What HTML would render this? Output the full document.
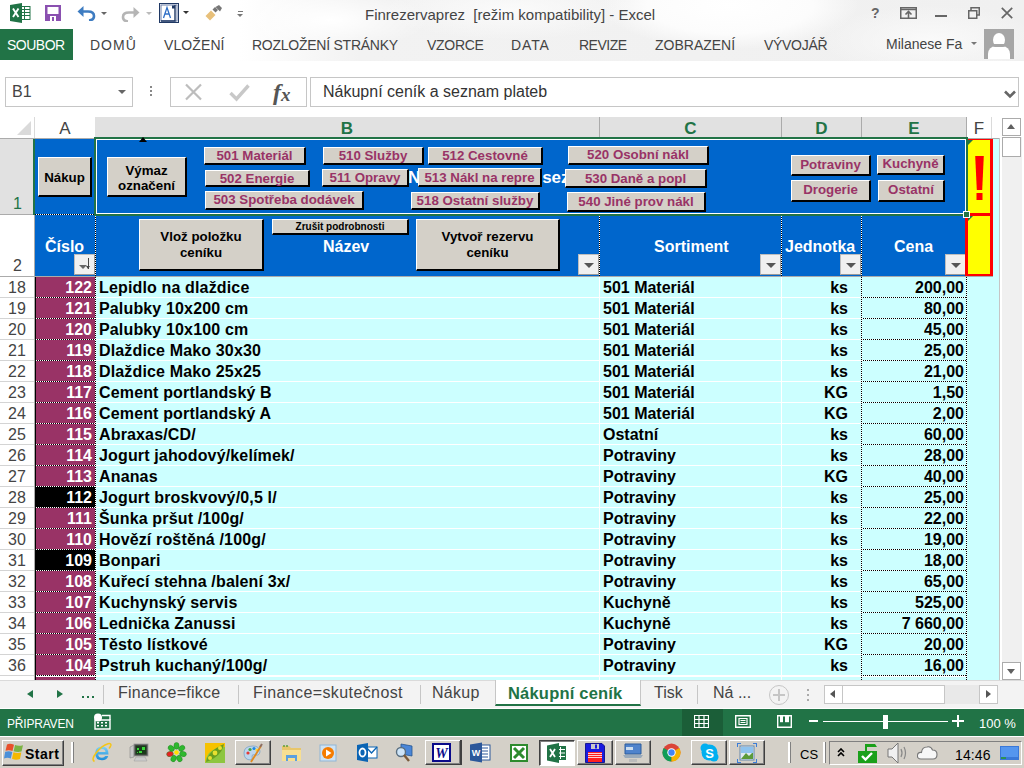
<!DOCTYPE html>
<html><head><meta charset="utf-8">
<style>
*{margin:0;padding:0;box-sizing:border-box}
html,body{width:1024px;height:768px;overflow:hidden;background:#fff;font-family:"Liberation Sans",sans-serif;position:relative}
.a{position:absolute}
.t{position:absolute;white-space:pre;line-height:1}
.tab{position:absolute;top:37px;font-size:14px;color:#444;letter-spacing:-0.3px;white-space:pre;line-height:16px}
.rh{position:absolute;left:0;width:34px;height:20px;background:#fff;color:#444;font-size:16px;text-align:center;line-height:21px}
.btn{position:absolute;background:#d4d0c8;border-top:1px solid #fff;border-left:1px solid #fff;border-right:2px solid #000;border-bottom:2px solid #000;font-weight:bold;text-align:center;white-space:pre;color:#993366}
.cA,.cB,.cC,.cD,.cE{position:absolute;height:20px;font-weight:bold;font-size:16px;line-height:21px;white-space:pre;overflow:hidden}
.cA{left:36px;width:59px;background:#993366;color:#fff;text-align:right;padding-right:3px}
.cB{left:96px;width:503px;background:#ccffff;padding-left:3px;color:#000;letter-spacing:0.15px}
.cC{left:600px;width:181px;background:#ccffff;padding-left:3px}
.cD{left:782px;width:79px;background:#ccffff;text-align:right;padding-right:13px}
.cE{left:862px;width:104px;background:#ccffff;text-align:right;padding-right:2px}
.dotx{background:repeating-linear-gradient(90deg,#000 0 1px,#fff 1px 2px)}
.doty{background:repeating-linear-gradient(180deg,#000 0 1px,#fff 1px 2px)}
.ch{position:absolute;top:119px;height:20px;line-height:20px;text-align:center;font-size:17px;color:#217346;font-weight:bold}
.hl{position:absolute;top:238px;font-size:16px;font-weight:bold;color:#fff;white-space:pre;line-height:18px}
.flt{position:absolute;width:21px;height:21px;background:#f0f0f0;border:1px solid #bdbdbd;border-right:1px solid #999;border-bottom:1px solid #999}
.flt.dd:after{content:"";position:absolute;left:5px;top:8px;border-left:5px solid transparent;border-right:5px solid transparent;border-top:5px solid #555}
.st{position:absolute;top:684px;font-size:16px;color:#444;white-space:pre;line-height:18px}
.tbb{position:absolute;background:#d4d0c8;border-top:1px solid #fff;border-left:1px solid #fff;border-right:1px solid #404040;border-bottom:1px solid #404040;box-shadow:inset -1px -1px 0 #808080}
.tbp{position:absolute;background:#fff;border-top:1px solid #404040;border-left:1px solid #404040;border-right:1px solid #fff;border-bottom:1px solid #fff;box-shadow:inset 1px 1px 0 #808080}

</style></head><body>
<!-- TITLE BAR & RIBBON -->
<div class="a" style="left:0;top:0;width:1024px;height:61px;background:linear-gradient(90deg,#fff 0,#fff 240px,#f2f2f2 360px,#f0f0f0 1024px);overflow:hidden">
  <div class="a" style="left:600px;top:-40px;width:260px;height:90px;border-radius:50%;background:radial-gradient(ellipse at center,#fff 0%,#fcfcfc 45%,rgba(255,255,255,0) 70%)"></div>
  <div class="a" style="left:230px;top:-10px;width:200px;height:60px;border-radius:50%;background:radial-gradient(ellipse at center,#fff 0%,rgba(255,255,255,0) 70%)"></div>
  <div class="a" style="left:820px;top:5px;width:220px;height:70px;border-radius:50%;background:radial-gradient(ellipse at center,#fafafa 0%,rgba(255,255,255,0) 70%)"></div>
  <div class="a" style="left:380px;top:-20px;width:260px;height:60px;border-radius:50%;background:radial-gradient(ellipse at center,#fbfbfb 0%,rgba(255,255,255,0) 70%)"></div>
  <svg class="a" style="left:10px;top:3px" width="21" height="20" viewBox="0 0 21 20">
<rect x="9.5" y="3.5" width="10.5" height="13" fill="#fff" stroke="#217346" stroke-width="1"/>
<path d="M10 6.5 h10 M10 9.5 h10 M10 12.5 h10 M14.5 3.5 v13" stroke="#217346" stroke-width="1"/>
<path d="M0 2 L12 0 V20 L0 18 Z" fill="#217346"/>
<path d="M3 5.5 L8.5 14 M8.5 5.5 L3 14" stroke="#fff" stroke-width="1.9"/>
</svg>
<svg class="a" style="left:45px;top:5px" width="16" height="16" viewBox="0 0 16 16">
<path d="M0 0 H16 V16 H0 Z" fill="#8a50b0"/><rect x="2.5" y="2" width="11" height="7" fill="#fff"/><rect x="5" y="11" width="6" height="5" fill="#fff"/><rect x="7" y="12" width="2" height="4" fill="#8a50b0"/>
</svg>
<svg class="a" style="left:77px;top:5px" width="19" height="16" viewBox="0 0 19 16">
<path d="M2 6.5 H11 Q17 6.5 17 11 Q17 15 12 15.5" stroke="#3e7cc1" stroke-width="2.6" fill="none"/>
<path d="M0.5 6.5 L6.5 1 V12 Z" fill="#3e7cc1"/>
</svg>
<div class="a" style="left:101px;top:12px;border-left:3px solid transparent;border-right:3px solid transparent;border-top:3px solid #666"></div>
<svg class="a" style="left:121px;top:6px" width="19" height="16" viewBox="0 0 19 16">
<path d="M17 6.5 H8 Q2 6.5 2 11 Q2 15 7 15.5" stroke="#b5b5b5" stroke-width="2.6" fill="none"/>
<path d="M18.5 6.5 L12.5 1 V12 Z" fill="#b5b5b5"/>
</svg>
<div class="a" style="left:146px;top:12px;border-left:3px solid transparent;border-right:3px solid transparent;border-top:3px solid #bbb"></div>
<svg class="a" style="left:159px;top:3px" width="20" height="20" viewBox="0 0 20 20">
<rect x="0.5" y="0.5" width="19" height="19" fill="#fff" stroke="#1f3864" stroke-width="1"/>
<rect x="2" y="2" width="16" height="16" fill="none" stroke="#6b7fa8" stroke-width="1"/>
<path d="M16 2 V18 H2" stroke="#1f3864" stroke-width="1.4" fill="none"/>
<rect x="13" y="2.5" width="3" height="3" fill="#1f3864"/>
<path d="M4.5 15 L8 4.5 L11.5 15 M6 11 H10" stroke="#2f6fc7" stroke-width="1.3" fill="none"/>
</svg>
<div class="a" style="left:183px;top:11px;border-left:3.5px solid transparent;border-right:3.5px solid transparent;border-top:3.5px solid #333"></div>
<svg class="a" style="left:205px;top:5px" width="18" height="16" viewBox="0 0 18 16">
<path d="M0.5 11 L6 5.5 L10.5 10 L5 15.5 Z" fill="#e8c07a"/>
<path d="M7.5 4.5 L10 2 L13 5 L10.5 7.5 Z M10.5 2 L14 0 L17 3 L15 6.5 Z" fill="#777"/>
</svg>
<div class="a" style="left:238px;top:11px;width:5px;height:1px;background:#777"></div>
<div class="a" style="left:237px;top:14px;border-left:3px solid transparent;border-right:3px solid transparent;border-top:3px solid #777"></div>
<!-- window controls -->
<div class="t" style="left:871px;top:6px;font-size:14px;font-weight:bold;color:#666">?</div>
<svg class="a" style="left:900px;top:7px" width="17" height="12" viewBox="0 0 17 12"><rect x="0.75" y="0.75" width="15.5" height="10.5" fill="none" stroke="#666" stroke-width="1.5"/><path d="M1 2.5 H16" stroke="#666" stroke-width="1.5"/><path d="M8.5 4.5 V11 M5.5 7.5 L8.5 4.5 L11.5 7.5" stroke="#666" stroke-width="1.6" fill="none"/></svg>
<div class="a" style="left:935px;top:15px;width:12px;height:2px;background:#666"></div>
<svg class="a" style="left:968px;top:7px" width="12" height="12" viewBox="0 0 12 12"><path d="M3 3 V0.75 H11.25 V8 H9" fill="none" stroke="#666" stroke-width="1.5"/><rect x="0.75" y="3.75" width="8" height="7.5" fill="none" stroke="#666" stroke-width="1.5"/></svg>
<svg class="a" style="left:1001px;top:7px" width="12" height="12" viewBox="0 0 12 12"><path d="M0.8 0.8 L11.2 11.2 M11.2 0.8 L0.8 11.2" stroke="#666" stroke-width="1.7"/></svg>

  <div class="t" style="left:365px;top:7px;font-size:15px;color:#444">Finrezervaprez  [režim kompatibility] - Excel</div>
  <div class="a" style="left:0;top:29px;width:73px;height:31px;background:#217346"></div>
  <div class="tab" style="left:7px;color:#fff;letter-spacing:-0.5px">SOUBOR</div>
  <div class="tab" style="left:90px;letter-spacing:1px">DOMŮ</div>
  <div class="tab" style="left:164px;letter-spacing:0.1px">VLOŽENÍ</div>
  <div class="tab" style="left:252px;letter-spacing:-0.25px">ROZLOŽENÍ STRÁNKY</div>
  <div class="tab" style="left:427px">VZORCE</div>
  <div class="tab" style="left:511px;letter-spacing:0.9px">DATA</div>
  <div class="tab" style="left:579px;letter-spacing:-0.5px">REVIZE</div>
  <div class="tab" style="left:655px;letter-spacing:0px">ZOBRAZENÍ</div>
  <div class="tab" style="left:764px">VÝVOJÁŘ</div>
  <div class="tab" style="left:886px;letter-spacing:0;top:36px">Milanese Fa</div>
  <div class="a" style="left:971px;top:42px;border-left:3px solid transparent;border-right:3px solid transparent;border-top:3px solid #777"></div>
  <div class="a" style="left:984px;top:29px;width:30px;height:30px;background:#a6a6a6;overflow:hidden">
    <div class="a" style="left:9px;top:4px;width:12px;height:14px;border-radius:50%;background:#fff"></div>
    <div class="a" style="left:4px;top:17px;width:22px;height:20px;border-radius:8px 8px 0 0;background:#fff"></div>
    <div class="a" style="left:8px;top:15px;width:14px;height:3px;background:#a6a6a6;border-radius:0 0 7px 7px"></div>
  </div>
</div>

<!-- FORMULA BAR -->
<div class="a" style="left:5px;top:77px;width:128px;height:30px;border:1px solid #c6c6c6;background:#fff"></div>
<div class="t" style="left:12px;top:84px;font-size:16px;color:#444">B1</div>
<div class="a" style="left:118px;top:90px;border-left:4px solid transparent;border-right:4px solid transparent;border-top:4px solid #666"></div>
<div class="a" style="left:150px;top:86px;width:2px;height:2px;background:#888"></div>
<div class="a" style="left:150px;top:90px;width:2px;height:2px;background:#888"></div>
<div class="a" style="left:150px;top:94px;width:2px;height:2px;background:#888"></div>
<div class="a" style="left:170px;top:77px;width:137px;height:30px;border:1px solid #c6c6c6;background:#fff"></div>
<svg class="a" style="left:184px;top:83px" width="20" height="18" viewBox="0 0 20 18"><path d="M2 1.5 L17 16.5 M17 1.5 L2 16.5" stroke="#bdbdbd" stroke-width="2.2" fill="none"/></svg>
<svg class="a" style="left:229px;top:83px" width="21" height="19" viewBox="0 0 21 19"><path d="M1.5 10 L7.5 16 L19.5 2.5" stroke="#c8c8c8" stroke-width="3.4" fill="none"/></svg>
<div class="t" style="left:273px;top:80px;font-family:'Liberation Serif',serif;font-style:italic;font-weight:bold;font-size:24px;color:#555">f</div><div class="t" style="left:281px;top:85px;font-family:'Liberation Serif',serif;font-style:italic;font-weight:bold;font-size:19px;color:#555">x</div>
<div class="a" style="left:310px;top:77px;width:709px;height:30px;border:1px solid #c6c6c6;background:#fff"></div>
<div class="t" style="left:323px;top:84px;font-size:16px;color:#333">Nákupní ceník a seznam plateb</div>
<svg class="a" style="left:1004px;top:90px" width="12" height="9" viewBox="0 0 12 9"><path d="M1 1.5 L6 6.5 L11 1.5" stroke="#666" stroke-width="2.6" fill="none"/></svg>

<!-- COLUMN HEADERS -->
<div class="a" style="left:0;top:117px;width:1000px;height:21px;background:#fff"></div>
<div class="a" style="left:0;top:138px;width:1000px;height:1px;background:#ababab"></div>
<div class="a" style="left:17px;top:121px;width:0;height:0;border-left:14px solid transparent;border-bottom:14px solid #dadada"></div>
<div class="a" style="left:34px;top:117px;width:1px;height:21px;background:#dadada"></div>
<div class="a" style="left:95px;top:117px;width:871px;height:20px;background:#e1e1e1"></div>
<div class="a" style="left:599px;top:117px;width:1px;height:20px;background:#ababab"></div>
<div class="a" style="left:781px;top:117px;width:1px;height:20px;background:#ababab"></div>
<div class="a" style="left:861px;top:117px;width:1px;height:20px;background:#ababab"></div>
<div class="a" style="left:966px;top:117px;width:1px;height:21px;background:#ababab"></div>
<div class="a" style="left:991px;top:117px;width:1px;height:21px;background:#dadada"></div>
<div class="ch" style="left:35px;width:60px;color:#444;font-weight:normal">A</div>
<div class="ch" style="left:95px;width:504px">B</div>
<div class="ch" style="left:600px;width:181px">C</div>
<div class="ch" style="left:782px;width:79px">D</div>
<div class="ch" style="left:862px;width:104px">E</div>
<div class="ch" style="left:967px;width:24px;color:#444;font-weight:normal">F</div>

<!-- ROW HEADERS 1,2 -->
<div class="a" style="left:0;top:139px;width:33px;height:75px;background:#e1e1e1"></div>
<div class="a" style="left:33px;top:139px;width:2px;height:76px;background:#217346"></div>
<div class="a" style="left:0;top:214px;width:33px;height:1px;background:#ababab"></div>
<div class="t" style="left:13px;top:196px;font-size:16px;color:#217346">1</div>
<div class="a" style="left:34px;top:215px;width:1px;height:61px;background:#ababab"></div>
<div class="t" style="left:13px;top:258px;font-size:16px;color:#444">2</div>
<div class="a" style="left:0;top:276px;width:1000px;height:1px;background:#ababab"></div>

<!-- ROW 1 / ROW 2 blue -->
<div class="a" style="left:35px;top:139px;width:931px;height:137px;background:#0066cc"></div>
<div class="a dotx" style="left:35px;top:214px;width:60px;height:1px"></div>
<div class="a doty" style="left:95px;top:215px;width:1px;height:61px"></div>
<div class="a doty" style="left:599px;top:215px;width:1px;height:61px"></div>
<div class="a doty" style="left:781px;top:215px;width:1px;height:61px"></div>
<div class="a doty" style="left:861px;top:215px;width:1px;height:61px"></div>
<div class="t" style="left:408px;top:169px;font-size:17px;font-weight:bold;color:#fff">Nákupní ceník a seznam plateb</div>
<div class="hl" style="left:45px">Číslo</div>
<div class="hl" style="left:323px">Název</div>
<div class="hl" style="left:654px">Sortiment</div>
<div class="hl" style="left:785px">Jednotka</div>
<div class="hl" style="left:894px">Cena</div>
<div class="flt" style="left:74px;top:254px"><span class="a" style="left:4px;top:10px;border-left:4px solid transparent;border-right:4px solid transparent;border-top:4px solid #666"></span><span class="a" style="left:13px;top:3px;width:1px;height:11px;background:#444"></span><span class="a" style="left:11px;top:11px;border-left:2.5px solid transparent;border-right:2.5px solid transparent;border-top:3px solid #444"></span></div>
<div class="flt dd" style="left:578px;top:254px"></div>
<div class="flt dd" style="left:760px;top:254px"></div>
<div class="flt dd" style="left:840px;top:254px"></div>
<div class="flt dd" style="left:945px;top:254px"></div>

<!-- F column yellow -->
<div class="a" style="left:967px;top:139px;width:26px;height:137px;background:#ffff00"></div>
<div class="a" style="left:967px;top:139px;width:26px;height:1px;background:#f00"></div>
<div class="a" style="left:990px;top:139px;width:3px;height:137px;background:#f00"></div>
<div class="a" style="left:967px;top:213px;width:26px;height:3px;background:#f00"></div>
<div class="a" style="left:965px;top:213px;width:3px;height:63px;background:#f00"></div>
<div class="a" style="left:965px;top:274px;width:28px;height:2px;background:#f00"></div>
<div class="a" style="left:968px;top:140px;border-right:5px solid transparent;border-top:5px solid #217346"></div>
<div class="a" style="left:968px;top:216px;border-right:5px solid transparent;border-top:5px solid #217346"></div>
<svg class="a" style="left:974px;top:155px" width="11" height="47" viewBox="0 0 11 47"><path d="M1.2 1 H9.8 L8.2 35 H2.8 Z" fill="#f00"/><rect x="2.5" y="38" width="6" height="7" fill="#f00"/></svg>
<div class="a" style="left:993px;top:139px;width:6px;height:541px;background:#ccffff"></div>
<div class="a" style="left:999px;top:138px;width:1px;height:542px;background:#c6c6c6"></div>

<!-- Selection border B1:E1 -->
<div class="a" style="left:94px;top:137px;width:874px;height:79px;border:2px solid #217346"></div>
<div class="a" style="left:96px;top:139px;width:870px;height:75px;border:1px solid #fff"></div>
<div class="a" style="left:963px;top:211px;width:7px;height:7px;background:#217346;border:1px solid #fff"></div>

<div class="a" style="left:139px;top:137px;border-left:4px solid transparent;border-right:4px solid transparent;border-bottom:5px solid #000"></div>
<div class="btn" style="left:38px;top:157px;width:54px;height:40px;font-size:13.3px;line-height:40px;color:#000;">Nákup</div>
<div class="btn" style="left:107px;top:157px;width:80px;height:40px;font-size:13.3px;line-height:15px;color:#000;padding-top:5px;">Výmaz
označení</div>
<div class="btn" style="left:204px;top:147px;width:102px;height:18px;font-size:13.3px;line-height:15px;color:#993366;">501 Materiál</div>
<div class="btn" style="left:205px;top:170px;width:105px;height:17px;font-size:13.3px;line-height:16px;color:#993366;">502 Energie</div>
<div class="btn" style="left:205px;top:191px;width:159px;height:19px;font-size:13.3px;line-height:16px;color:#993366;">503 Spotřeba dodávek</div>
<div class="btn" style="left:323px;top:147px;width:101px;height:18px;font-size:13.3px;line-height:15px;color:#993366;">510 Služby</div>
<div class="btn" style="left:322px;top:169px;width:87px;height:18px;font-size:13.3px;line-height:16px;color:#993366;">511 Opravy</div>
<div class="btn" style="left:428px;top:147px;width:115px;height:18px;font-size:13.3px;line-height:16px;color:#993366;">512 Cestovné</div>
<div class="btn" style="left:418px;top:168px;width:124px;height:19px;font-size:13.3px;line-height:17px;color:#993366;">513 Nákl na repre</div>
<div class="btn" style="left:411px;top:192px;width:129px;height:18px;font-size:13.3px;line-height:16px;color:#993366;">518 Ostatní služby</div>
<div class="btn" style="left:568px;top:146px;width:141px;height:19px;font-size:13.3px;line-height:15px;color:#993366;">520 Osobní nákl</div>
<div class="btn" style="left:565px;top:169px;width:142px;height:19px;font-size:13.3px;line-height:17px;color:#993366;">530 Daně a popl</div>
<div class="btn" style="left:567px;top:192px;width:139px;height:20px;font-size:13.3px;line-height:17px;color:#993366;">540 Jiné prov nákl</div>
<div class="btn" style="left:791px;top:155px;width:80px;height:21px;font-size:13.3px;line-height:18px;color:#993366;">Potraviny</div>
<div class="btn" style="left:877px;top:155px;width:68px;height:20px;font-size:13.3px;line-height:16px;color:#993366;">Kuchyně</div>
<div class="btn" style="left:791px;top:180px;width:80px;height:22px;font-size:13.3px;line-height:18px;color:#993366;">Drogerie</div>
<div class="btn" style="left:878px;top:180px;width:67px;height:22px;font-size:13.3px;line-height:18px;color:#993366;">Ostatní</div>
<div class="btn" style="left:139px;top:219px;width:125px;height:52px;font-size:13.3px;line-height:16px;color:#000;padding-top:9px;">Vlož položku
ceníku</div>
<div class="btn" style="left:272px;top:219px;width:137px;height:16px;font-size:10px;line-height:14px;color:#000;">Zrušit podrobnosti</div>
<div class="btn" style="left:416px;top:219px;width:144px;height:52px;font-size:13.3px;line-height:16px;color:#000;padding-top:9px;">Vytvoř rezervu
ceníku</div>


<!-- DATA ROWS -->
<div class="rh" style="top:277px">18</div>
<div class="cA" style="top:277px;background:#993366">122</div>
<div class="cB" style="top:277px">Lepidlo na dlaždice</div>
<div class="cC" style="top:277px">501 Materiál</div>
<div class="cD" style="top:277px">ks</div>
<div class="cE" style="top:277px">200,00</div>
<div class="rh" style="top:298px">19</div>
<div class="cA" style="top:298px;background:#993366">121</div>
<div class="cB" style="top:298px">Palubky 10x200 cm</div>
<div class="cC" style="top:298px">501 Materiál</div>
<div class="cD" style="top:298px">ks</div>
<div class="cE" style="top:298px">80,00</div>
<div class="rh" style="top:319px">20</div>
<div class="cA" style="top:319px;background:#993366">120</div>
<div class="cB" style="top:319px">Palubky 10x100 cm</div>
<div class="cC" style="top:319px">501 Materiál</div>
<div class="cD" style="top:319px">ks</div>
<div class="cE" style="top:319px">45,00</div>
<div class="rh" style="top:340px">21</div>
<div class="cA" style="top:340px;background:#993366">119</div>
<div class="cB" style="top:340px">Dlaždice Mako 30x30</div>
<div class="cC" style="top:340px">501 Materiál</div>
<div class="cD" style="top:340px">ks</div>
<div class="cE" style="top:340px">25,00</div>
<div class="rh" style="top:361px">22</div>
<div class="cA" style="top:361px;background:#993366">118</div>
<div class="cB" style="top:361px">Dlaždice Mako 25x25</div>
<div class="cC" style="top:361px">501 Materiál</div>
<div class="cD" style="top:361px">ks</div>
<div class="cE" style="top:361px">21,00</div>
<div class="rh" style="top:382px">23</div>
<div class="cA" style="top:382px;background:#993366">117</div>
<div class="cB" style="top:382px">Cement portlandský B</div>
<div class="cC" style="top:382px">501 Materiál</div>
<div class="cD" style="top:382px">KG</div>
<div class="cE" style="top:382px">1,50</div>
<div class="rh" style="top:403px">24</div>
<div class="cA" style="top:403px;background:#993366">116</div>
<div class="cB" style="top:403px">Cement portlandský A</div>
<div class="cC" style="top:403px">501 Materiál</div>
<div class="cD" style="top:403px">KG</div>
<div class="cE" style="top:403px">2,00</div>
<div class="rh" style="top:424px">25</div>
<div class="cA" style="top:424px;background:#993366">115</div>
<div class="cB" style="top:424px">Abraxas/CD/</div>
<div class="cC" style="top:424px">Ostatní</div>
<div class="cD" style="top:424px">ks</div>
<div class="cE" style="top:424px">60,00</div>
<div class="rh" style="top:445px">26</div>
<div class="cA" style="top:445px;background:#993366">114</div>
<div class="cB" style="top:445px">Jogurt jahodový/kelímek/</div>
<div class="cC" style="top:445px">Potraviny</div>
<div class="cD" style="top:445px">ks</div>
<div class="cE" style="top:445px">28,00</div>
<div class="rh" style="top:466px">27</div>
<div class="cA" style="top:466px;background:#993366">113</div>
<div class="cB" style="top:466px">Ananas</div>
<div class="cC" style="top:466px">Potraviny</div>
<div class="cD" style="top:466px">KG</div>
<div class="cE" style="top:466px">40,00</div>
<div class="rh" style="top:487px">28</div>
<div class="cA" style="top:487px;background:#000">112</div>
<div class="cB" style="top:487px">Jogurt broskvový/0,5 l/</div>
<div class="cC" style="top:487px">Potraviny</div>
<div class="cD" style="top:487px">ks</div>
<div class="cE" style="top:487px">25,00</div>
<div class="rh" style="top:508px">29</div>
<div class="cA" style="top:508px;background:#993366">111</div>
<div class="cB" style="top:508px">Šunka pršut /100g/</div>
<div class="cC" style="top:508px">Potraviny</div>
<div class="cD" style="top:508px">ks</div>
<div class="cE" style="top:508px">22,00</div>
<div class="rh" style="top:529px">30</div>
<div class="cA" style="top:529px;background:#993366">110</div>
<div class="cB" style="top:529px">Hovězí roštěná /100g/</div>
<div class="cC" style="top:529px">Potraviny</div>
<div class="cD" style="top:529px">ks</div>
<div class="cE" style="top:529px">19,00</div>
<div class="rh" style="top:550px">31</div>
<div class="cA" style="top:550px;background:#000">109</div>
<div class="cB" style="top:550px">Bonpari</div>
<div class="cC" style="top:550px">Potraviny</div>
<div class="cD" style="top:550px">ks</div>
<div class="cE" style="top:550px">18,00</div>
<div class="rh" style="top:571px">32</div>
<div class="cA" style="top:571px;background:#993366">108</div>
<div class="cB" style="top:571px">Kuřecí stehna /balení 3x/</div>
<div class="cC" style="top:571px">Potraviny</div>
<div class="cD" style="top:571px">ks</div>
<div class="cE" style="top:571px">65,00</div>
<div class="rh" style="top:592px">33</div>
<div class="cA" style="top:592px;background:#993366">107</div>
<div class="cB" style="top:592px">Kuchynský servis</div>
<div class="cC" style="top:592px">Kuchyně</div>
<div class="cD" style="top:592px">ks</div>
<div class="cE" style="top:592px">525,00</div>
<div class="rh" style="top:613px">34</div>
<div class="cA" style="top:613px;background:#993366">106</div>
<div class="cB" style="top:613px">Lednička Zanussi</div>
<div class="cC" style="top:613px">Kuchyně</div>
<div class="cD" style="top:613px">ks</div>
<div class="cE" style="top:613px">7 660,00</div>
<div class="rh" style="top:634px">35</div>
<div class="cA" style="top:634px;background:#993366">105</div>
<div class="cB" style="top:634px">Těsto lístkové</div>
<div class="cC" style="top:634px">Potraviny</div>
<div class="cD" style="top:634px">KG</div>
<div class="cE" style="top:634px">20,00</div>
<div class="rh" style="top:655px">36</div>
<div class="cA" style="top:655px;background:#993366">104</div>
<div class="cB" style="top:655px">Pstruh kuchaný/100g/</div>
<div class="cC" style="top:655px">Potraviny</div>
<div class="cD" style="top:655px">ks</div>
<div class="cE" style="top:655px">16,00</div>
<div class="a" style="left:967px;top:277px;width:32px;height:403px;background:#ccffff"></div>
<div class="a" style="left:0;top:677px;width:34px;height:3px;background:#fff"></div>
<div class="a" style="left:35px;top:677px;width:60px;height:3px;background:#993366"></div>
<div class="a" style="left:95px;top:677px;width:904px;height:3px;background:#ccffff"></div>
<div class="a" style="left:0;top:297px;width:34px;height:1px;background:#d4d4d4"></div>
<div class="a dotx" style="left:35px;top:297px;width:61px;height:1px"></div>
<div class="a" style="left:96px;top:297px;width:765px;height:1px;background:#fff"></div>
<div class="a dotx" style="left:861px;top:297px;width:106px;height:1px"></div>
<div class="a" style="left:0;top:318px;width:34px;height:1px;background:#d4d4d4"></div>
<div class="a dotx" style="left:35px;top:318px;width:61px;height:1px"></div>
<div class="a" style="left:96px;top:318px;width:765px;height:1px;background:#fff"></div>
<div class="a dotx" style="left:861px;top:318px;width:106px;height:1px"></div>
<div class="a" style="left:0;top:339px;width:34px;height:1px;background:#d4d4d4"></div>
<div class="a dotx" style="left:35px;top:339px;width:61px;height:1px"></div>
<div class="a" style="left:96px;top:339px;width:765px;height:1px;background:#fff"></div>
<div class="a dotx" style="left:861px;top:339px;width:106px;height:1px"></div>
<div class="a" style="left:0;top:360px;width:34px;height:1px;background:#d4d4d4"></div>
<div class="a dotx" style="left:35px;top:360px;width:61px;height:1px"></div>
<div class="a" style="left:96px;top:360px;width:765px;height:1px;background:#fff"></div>
<div class="a dotx" style="left:861px;top:360px;width:106px;height:1px"></div>
<div class="a" style="left:0;top:381px;width:34px;height:1px;background:#d4d4d4"></div>
<div class="a dotx" style="left:35px;top:381px;width:61px;height:1px"></div>
<div class="a" style="left:96px;top:381px;width:765px;height:1px;background:#fff"></div>
<div class="a dotx" style="left:861px;top:381px;width:106px;height:1px"></div>
<div class="a" style="left:0;top:402px;width:34px;height:1px;background:#d4d4d4"></div>
<div class="a dotx" style="left:35px;top:402px;width:61px;height:1px"></div>
<div class="a" style="left:96px;top:402px;width:765px;height:1px;background:#fff"></div>
<div class="a dotx" style="left:861px;top:402px;width:106px;height:1px"></div>
<div class="a" style="left:0;top:423px;width:34px;height:1px;background:#d4d4d4"></div>
<div class="a dotx" style="left:35px;top:423px;width:61px;height:1px"></div>
<div class="a" style="left:96px;top:423px;width:765px;height:1px;background:#fff"></div>
<div class="a dotx" style="left:861px;top:423px;width:106px;height:1px"></div>
<div class="a" style="left:0;top:444px;width:34px;height:1px;background:#d4d4d4"></div>
<div class="a dotx" style="left:35px;top:444px;width:61px;height:1px"></div>
<div class="a" style="left:96px;top:444px;width:765px;height:1px;background:#fff"></div>
<div class="a dotx" style="left:861px;top:444px;width:106px;height:1px"></div>
<div class="a" style="left:0;top:465px;width:34px;height:1px;background:#d4d4d4"></div>
<div class="a dotx" style="left:35px;top:465px;width:61px;height:1px"></div>
<div class="a" style="left:96px;top:465px;width:765px;height:1px;background:#fff"></div>
<div class="a dotx" style="left:861px;top:465px;width:106px;height:1px"></div>
<div class="a" style="left:0;top:486px;width:34px;height:1px;background:#d4d4d4"></div>
<div class="a dotx" style="left:35px;top:486px;width:61px;height:1px"></div>
<div class="a" style="left:96px;top:486px;width:765px;height:1px;background:#fff"></div>
<div class="a dotx" style="left:861px;top:486px;width:106px;height:1px"></div>
<div class="a" style="left:0;top:507px;width:34px;height:1px;background:#d4d4d4"></div>
<div class="a dotx" style="left:35px;top:507px;width:61px;height:1px"></div>
<div class="a" style="left:96px;top:507px;width:765px;height:1px;background:#fff"></div>
<div class="a dotx" style="left:861px;top:507px;width:106px;height:1px"></div>
<div class="a" style="left:0;top:528px;width:34px;height:1px;background:#d4d4d4"></div>
<div class="a dotx" style="left:35px;top:528px;width:61px;height:1px"></div>
<div class="a" style="left:96px;top:528px;width:765px;height:1px;background:#fff"></div>
<div class="a dotx" style="left:861px;top:528px;width:106px;height:1px"></div>
<div class="a" style="left:0;top:549px;width:34px;height:1px;background:#d4d4d4"></div>
<div class="a dotx" style="left:35px;top:549px;width:61px;height:1px"></div>
<div class="a" style="left:96px;top:549px;width:765px;height:1px;background:#fff"></div>
<div class="a dotx" style="left:861px;top:549px;width:106px;height:1px"></div>
<div class="a" style="left:0;top:570px;width:34px;height:1px;background:#d4d4d4"></div>
<div class="a dotx" style="left:35px;top:570px;width:61px;height:1px"></div>
<div class="a" style="left:96px;top:570px;width:765px;height:1px;background:#fff"></div>
<div class="a dotx" style="left:861px;top:570px;width:106px;height:1px"></div>
<div class="a" style="left:0;top:591px;width:34px;height:1px;background:#d4d4d4"></div>
<div class="a dotx" style="left:35px;top:591px;width:61px;height:1px"></div>
<div class="a" style="left:96px;top:591px;width:765px;height:1px;background:#fff"></div>
<div class="a dotx" style="left:861px;top:591px;width:106px;height:1px"></div>
<div class="a" style="left:0;top:612px;width:34px;height:1px;background:#d4d4d4"></div>
<div class="a dotx" style="left:35px;top:612px;width:61px;height:1px"></div>
<div class="a" style="left:96px;top:612px;width:765px;height:1px;background:#fff"></div>
<div class="a dotx" style="left:861px;top:612px;width:106px;height:1px"></div>
<div class="a" style="left:0;top:633px;width:34px;height:1px;background:#d4d4d4"></div>
<div class="a dotx" style="left:35px;top:633px;width:61px;height:1px"></div>
<div class="a" style="left:96px;top:633px;width:765px;height:1px;background:#fff"></div>
<div class="a dotx" style="left:861px;top:633px;width:106px;height:1px"></div>
<div class="a" style="left:0;top:654px;width:34px;height:1px;background:#d4d4d4"></div>
<div class="a dotx" style="left:35px;top:654px;width:61px;height:1px"></div>
<div class="a" style="left:96px;top:654px;width:765px;height:1px;background:#fff"></div>
<div class="a dotx" style="left:861px;top:654px;width:106px;height:1px"></div>
<div class="a" style="left:0;top:675px;width:34px;height:1px;background:#d4d4d4"></div>
<div class="a dotx" style="left:35px;top:675px;width:61px;height:1px"></div>
<div class="a" style="left:96px;top:675px;width:765px;height:1px;background:#fff"></div>
<div class="a dotx" style="left:861px;top:675px;width:106px;height:1px"></div>
<div class="a" style="left:34px;top:277px;width:1px;height:403px;background:#ababab"></div>
<div class="a" style="left:35px;top:277px;width:1px;height:403px;background:#000"></div>
<div class="a doty" style="left:95px;top:277px;width:1px;height:403px"></div>
<div class="a" style="left:599px;top:277px;width:1px;height:403px;background:#fff"></div>
<div class="a" style="left:781px;top:277px;width:1px;height:403px;background:#fff"></div>
<div class="a doty" style="left:861px;top:277px;width:1px;height:403px"></div>
<div class="a doty" style="left:966px;top:277px;width:1px;height:403px"></div>

<!-- VERTICAL SCROLLBAR -->
<div class="a" style="left:1000px;top:117px;width:24px;height:563px;background:#fff"></div>
<div class="a" style="left:1002px;top:137px;width:20px;height:525px;background:#f0f0f0"></div>
<div class="a" style="left:1002px;top:118px;width:19px;height:18px;background:#fff;border:1px solid #ababab"></div>
<div class="a" style="left:1007px;top:124px;border-left:4.5px solid transparent;border-right:4.5px solid transparent;border-bottom:5px solid #606060"></div>
<div class="a" style="left:1002px;top:137px;width:19px;height:20px;background:#fff;border:1px solid #ababab"></div>
<div class="a" style="left:1002px;top:662px;width:19px;height:18px;background:#fff;border:1px solid #ababab"></div>
<div class="a" style="left:1007px;top:669px;border-left:4.5px solid transparent;border-right:4.5px solid transparent;border-top:5px solid #606060"></div>

<!-- SHEET TABS -->
<div class="a" style="left:0;top:680px;width:1024px;height:28px;background:#f3f3f3;border-top:1px solid #dadada"></div>
<div class="a" style="left:27px;top:690px;border-top:4.5px solid transparent;border-bottom:4.5px solid transparent;border-right:6px solid #217346"></div>
<div class="a" style="left:57px;top:690px;border-top:4.5px solid transparent;border-bottom:4.5px solid transparent;border-left:6px solid #217346"></div>
<div class="a" style="left:82px;top:696px;width:2px;height:2px;background:#217346"></div>
<div class="a" style="left:87px;top:696px;width:2px;height:2px;background:#217346"></div>
<div class="a" style="left:92px;top:696px;width:2px;height:2px;background:#217346"></div>
<div class="a" style="left:103px;top:685px;width:1px;height:19px;background:#c6c6c6"></div>
<div class="st" style="left:118px;letter-spacing:0.25px">Finance=fikce</div>
<div class="a" style="left:238px;top:685px;width:1px;height:19px;background:#c6c6c6"></div>
<div class="st" style="left:253px;letter-spacing:0.4px">Finance=skutečnost</div>
<div class="a" style="left:420px;top:685px;width:1px;height:19px;background:#c6c6c6"></div>
<div class="st" style="left:432px;letter-spacing:0.3px">Nákup</div>
<div class="a" style="left:495px;top:680px;width:146px;height:26px;background:#fff;border:1px solid #c6c6c6;border-top:none;border-bottom:2px solid #217346"></div>
<div class="st" style="left:508px;font-weight:bold;color:#217346;letter-spacing:0.2px;font-size:16.5px">Nákupní ceník</div>
<div class="st" style="left:654px">Tisk</div>
<div class="a" style="left:697px;top:685px;width:1px;height:19px;background:#c6c6c6"></div>
<div class="st" style="left:713px">Ná ...</div>
<div class="a" style="left:769px;top:685px;width:20px;height:20px;border:1.5px solid #c6c6c6;border-radius:50%"></div>
<div class="a" style="left:773px;top:694px;width:12px;height:2px;background:#c6c6c6"></div>
<div class="a" style="left:778px;top:689px;width:2px;height:12px;background:#c6c6c6"></div>
<div class="a" style="left:807px;top:689px;width:2px;height:2px;background:#aaa"></div>
<div class="a" style="left:807px;top:694px;width:2px;height:2px;background:#aaa"></div>
<div class="a" style="left:807px;top:699px;width:2px;height:2px;background:#aaa"></div>
<div class="a" style="left:824px;top:685px;width:174px;height:19px;background:#e9e9e9"></div>
<div class="a" style="left:824px;top:685px;width:19px;height:19px;background:#fff;border:1px solid #c6c6c6"></div>
<div class="a" style="left:830px;top:690px;border-top:4.5px solid transparent;border-bottom:4.5px solid transparent;border-right:5px solid #555"></div>
<div class="a" style="left:842px;top:685px;width:103px;height:19px;background:#fff;border:1px solid #c6c6c6"></div>
<div class="a" style="left:979px;top:685px;width:19px;height:19px;background:#fff;border:1px solid #c6c6c6"></div>
<div class="a" style="left:986px;top:690px;border-top:4.5px solid transparent;border-bottom:4.5px solid transparent;border-left:5px solid #555"></div>

<!-- STATUS BAR -->
<div class="a" style="left:0;top:708px;width:1024px;height:1px;background:#fff"></div><div class="a" style="left:0;top:709px;width:1024px;height:27px;background:#217346"></div>
<div class="t" style="left:7px;top:718px;font-size:12px;color:#fff;letter-spacing:-0.2px">PŘIPRAVEN</div>
<svg class="a" style="left:93px;top:713px" width="18" height="17" viewBox="0 0 18 17"><circle cx="5" cy="4.5" r="4" fill="#fff"/><path d="M2 7 H17 V16 H2 Z" fill="none" stroke="#fff" stroke-width="1.4"/><path d="M9 2.5 H17 V7" fill="none" stroke="#fff" stroke-width="1.4"/><rect x="4" y="9" width="2" height="1.5" fill="#fff"/><rect x="8" y="9" width="2" height="1.5" fill="#fff"/><rect x="12" y="9" width="2" height="1.5" fill="#fff"/><rect x="4" y="12" width="2" height="1.5" fill="#fff"/><rect x="8" y="12" width="2" height="1.5" fill="#fff"/><rect x="12" y="12" width="2" height="1.5" fill="#fff"/></svg>
<div class="a" style="left:682px;top:709px;width:41px;height:27px;background:#1b5e38"></div>
<svg class="a" style="left:694px;top:715px" width="15" height="13" viewBox="0 0 15 13"><path d="M0.5 0.5 H14.5 V12.5 H0.5 Z M0.5 4.5 H14.5 M0.5 8.5 H14.5 M5 0.5 V12.5 M10 0.5 V12.5" fill="none" stroke="#fff" stroke-width="1.2"/></svg>
<svg class="a" style="left:735px;top:715px" width="16" height="13" viewBox="0 0 16 13"><path d="M0.7 0.7 H15.3 V12.3 H0.7 Z" fill="none" stroke="#fff" stroke-width="1.4"/><path d="M4 3.5 H12 V9.5 H4 Z" fill="none" stroke="#fff" stroke-width="1.2"/><path d="M5.5 5.5 H10.5 M5.5 7.5 H10.5" stroke="#fff" stroke-width="1"/></svg>
<svg class="a" style="left:777px;top:715px" width="15" height="13" viewBox="0 0 15 13"><path d="M0.7 0.7 H14.3 V12.3 H0.7 Z" fill="none" stroke="#fff" stroke-width="1.4"/><rect x="3" y="0.7" width="3" height="6.5" fill="#fff"/><rect x="8" y="0.7" width="4" height="6.5" fill="#fff"/></svg>
<div class="a" style="left:809px;top:720px;width:9px;height:2px;background:#fff"></div>
<div class="a" style="left:823px;top:721px;width:125px;height:1px;background:#fff"></div>
<div class="a" style="left:883px;top:715px;width:5px;height:14px;background:#fff"></div>
<div class="a" style="left:952px;top:720px;width:12px;height:2px;background:#fff"></div>
<div class="a" style="left:957px;top:715px;width:2px;height:12px;background:#fff"></div>
<div class="t" style="left:979px;top:717px;font-size:13px;color:#fff">100 %</div>

<!-- TASKBAR -->
<div class="a" style="left:0;top:736px;width:1024px;height:32px;background:#d4d0c8;border-top:1px solid #fff"></div>
<div class="tbb" style="left:2px;top:740px;width:62px;height:26px"></div>
<svg class="a" style="left:4px;top:743px" width="20" height="18" viewBox="0 0 20 18">
<path d="M3 1.5 Q6 0 10 1.8 L8.5 8 Q5 6.5 1.5 7.8 Z" fill="#e8502a"/>
<path d="M11 2 Q14.5 3.5 19 2.2 L17.5 8.5 Q13.5 9.5 9.6 8.2 Z" fill="#7cb342"/>
<path d="M1.2 8.8 Q5 7.5 8.3 9 L6.8 15.5 Q3.5 14 0 15.5 Z" fill="#4a90d9"/>
<path d="M9.4 9.2 Q13 10.5 17.3 9.5 L16 16 Q12 17.5 8 15.8 Z" fill="#f5b800"/>
</svg>
<div class="t" style="left:25px;top:747px;font-size:14px;font-weight:bold;color:#000;letter-spacing:0.5px">Start</div>
<div class="a" style="left:71px;top:742px;width:1px;height:21px;background:#fff"></div>
<div class="a" style="left:72px;top:742px;width:2px;height:21px;background:#fff;border-right:1px solid #808080"></div>
<!-- IE -->
<svg class="a" style="left:91px;top:742px" width="21" height="21" viewBox="0 0 21 21">
<defs><linearGradient id="ieg" x1="0" y1="0" x2="0" y2="1"><stop offset="0" stop-color="#7fd3f7"/><stop offset="1" stop-color="#1a8ad8"/></linearGradient></defs>
<path d="M17.5 12.5 H7.2 Q7.6 15.8 11 15.8 Q13.3 15.8 14.3 14 H17.3 Q15.8 18.3 11 18.3 Q4.2 18.3 4.2 11.3 Q4.2 4.5 11 4.5 Q17.6 4.5 17.5 12.5 Z M7.3 10 H14.5 Q14.2 7 11 7 Q7.8 7 7.3 10 Z" fill="url(#ieg)"/>
<path d="M3.5 19.5 Q0 17.5 5 11 Q11 3.5 17 1.8 Q20.5 1 19.8 3.5 Q19.3 5 18 6.5" fill="none" stroke="#f5c518" stroke-width="1.5"/>
</svg>
<!-- monitor -->
<svg class="a" style="left:129px;top:742px" width="20" height="21" viewBox="0 0 20 21">
<path d="M1 5 L5 3 V15 L1 16 Z" fill="#c8c8c8" stroke="#888" stroke-width="0.6"/>
<rect x="5" y="2" width="14" height="12" fill="#555" stroke="#999" stroke-width="0.8"/>
<rect x="6.5" y="3.5" width="11" height="9" fill="#1b3a1b"/>
<path d="M8 6 h2 v2 h-2 z M10 9 h3 v2 h-3z M13 5 h3 v3 h-3z M8 10 h1 v1 h-1z" fill="#38d838"/>
<path d="M7 15 h9 l2 4 h-13 z" fill="#ccc" stroke="#999" stroke-width="0.5"/>
</svg>
<!-- ICQ -->
<svg class="a" style="left:166px;top:742px" width="21" height="21" viewBox="0 0 21 21">
<g fill="#2eb82e" stroke="#1a7a1a" stroke-width="0.4">
<ellipse cx="10.5" cy="3.8" rx="2.6" ry="3.4"/>
<ellipse cx="10.5" cy="3.8" rx="2.6" ry="3.4" transform="rotate(51.4 10.5 10.5)"/>
<ellipse cx="10.5" cy="3.8" rx="2.6" ry="3.4" transform="rotate(102.8 10.5 10.5)"/>
<ellipse cx="10.5" cy="3.8" rx="2.6" ry="3.4" transform="rotate(154.2 10.5 10.5)"/>
<ellipse cx="10.5" cy="3.8" rx="2.6" ry="3.4" transform="rotate(205.6 10.5 10.5)"/>
<ellipse cx="10.5" cy="3.8" rx="2.6" ry="3.4" fill="#e52222" transform="rotate(257 10.5 10.5)"/>
<ellipse cx="10.5" cy="3.8" rx="2.6" ry="3.4" transform="rotate(308.4 10.5 10.5)"/>
</g>
<circle cx="10.5" cy="10.5" r="2.3" fill="#ffe000"/>
</svg>
<!-- pea -->
<svg class="a" style="left:205px;top:743px" width="20" height="20" viewBox="0 0 20 20">
<rect x="0" y="0" width="20" height="20" fill="#8dc63f"/><path d="M0 0 H20 V4 Q10 4 4 10 Q1 14 0 20 Z" fill="#f6c200"/>
<path d="M1 19 Q3 8 19 1 Q17 13 1 19 Z" fill="#6a9e1f"/>
<circle cx="5" cy="15" r="2" fill="#e8e030"/><circle cx="10" cy="10" r="2.4" fill="#e8e030"/><circle cx="15" cy="5" r="2" fill="#e8e030"/>
</svg>
<!-- palette button -->
<div class="tbb" style="left:235px;top:740px;width:36px;height:25px"></div>
<svg class="a" style="left:243px;top:743px" width="21" height="20" viewBox="0 0 21 20">
<path d="M10 3 Q1 3 1 10 Q1 17 8 17 Q10 15 9 13 Q9 11 12 12 Q17 13 17 8 Q16 3 10 3 Z" fill="#bcd6ee" stroke="#7aa3c8" stroke-width="0.8"/>
<circle cx="5" cy="10" r="1.6" fill="#e53935"/><circle cx="7" cy="6.5" r="1.6" fill="#43a047"/><circle cx="11" cy="5.5" r="1.6" fill="#1e88e5"/><circle cx="14" cy="7" r="1.6" fill="#fdd835"/>
<path d="M8 19 L18 3" stroke="#e08a1e" stroke-width="1.8"/><path d="M17 4 L19 1" stroke="#8d6e63" stroke-width="2"/>
</svg>
<!-- folder -->
<svg class="a" style="left:281px;top:743px" width="21" height="20" viewBox="0 0 21 20">
<path d="M1 3 H8 L10 5 H20 V18 H1 Z" fill="#e8c66a"/><path d="M1 7 H20 V18 H1 Z" fill="#f7df92"/>
<path d="M2 3 h2 M5 3 h2" stroke="#5c9e3d" stroke-width="1.5"/>
<path d="M5 12 H16 V18 H14 V15 H7 V18 H5 Z" fill="#5aa0e0"/>
</svg>
<!-- media player -->
<svg class="a" style="left:319px;top:743px" width="19" height="20" viewBox="0 0 19 20">
<rect x="1" y="2" width="16" height="16" fill="#cfe3f4" stroke="#8fb5d6"/>
<circle cx="9" cy="10" r="6" fill="#f57c00"/><path d="M7 6.5 L12.5 10 L7 13.5 Z" fill="#fff"/>
</svg>
<!-- outlook -->
<svg class="a" style="left:357px;top:742px" width="21" height="21" viewBox="0 0 21 21">
<rect x="9" y="5" width="11" height="11" fill="#fff" stroke="#0a64b4"/><path d="M9 5 L14.5 11 L20 5" fill="none" stroke="#0a64b4" stroke-width="1.3"/>
<path d="M0 3 L11 1 V20 L0 18 Z" fill="#0a64b4"/><ellipse cx="5.5" cy="10.5" rx="3" ry="4" fill="none" stroke="#fff" stroke-width="1.8"/>
</svg>
<!-- network magnifier -->
<svg class="a" style="left:395px;top:742px" width="19" height="21" viewBox="0 0 19 21">
<path d="M6 2 L17 4 V14 L6 12 Z" fill="#4a86d8" stroke="#26568f" stroke-width="0.8"/>
<circle cx="6" cy="10" r="4.5" fill="#cde4f8" stroke="#5a6f80" stroke-width="1.4"/>
<path d="M9 13 L14 19" stroke="#7a5a3a" stroke-width="2.4"/>
</svg>
<!-- word 2003 button -->
<div class="tbb" style="left:425px;top:740px;width:36px;height:25px"></div>
<div class="a" style="left:460px;top:740px;width:2px;height:25px;background:#404040"></div>
<svg class="a" style="left:432px;top:743px" width="19" height="19" viewBox="0 0 19 19">
<rect x="1" y="1" width="17" height="17" fill="#fff" stroke="#0a0a8a" stroke-width="2"/>
<text x="9.5" y="15" text-anchor="middle" font-family="Liberation Serif" font-style="italic" font-weight="bold" font-size="14" fill="#0a0a8a">W</text>
</svg>
<!-- word 2013 -->
<svg class="a" style="left:470px;top:742px" width="21" height="21" viewBox="0 0 21 21">
<rect x="9" y="3" width="11" height="15" fill="#fff" stroke="#2b579a"/><path d="M11 6 h7 M11 9 h7 M11 12 h7 M11 15 h7" stroke="#2b579a" stroke-width="1"/>
<path d="M0 2.5 L12 0.5 V20.5 L0 18.5 Z" fill="#2b579a"/>
<text x="6" y="14" text-anchor="middle" font-family="Liberation Sans" font-weight="bold" font-size="9" fill="#fff">W</text>
</svg>
<!-- excel old -->
<svg class="a" style="left:510px;top:744px" width="18" height="18" viewBox="0 0 18 18">
<rect x="1" y="1" width="16" height="16" fill="#fff" stroke="#2e8b2e" stroke-width="2"/>
<path d="M4 4 L14 14 M14 4 L4 14" stroke="#2e8b2e" stroke-width="3"/>
</svg>
<!-- excel 2013 pressed -->
<div class="tbp" style="left:539px;top:740px;width:36px;height:26px"></div>
<svg class="a" style="left:547px;top:743px" width="20" height="20" viewBox="0 0 20 20">
<rect x="9" y="3" width="10" height="14" fill="#217346"/><path d="M10 6.5 h8 M10 10 h8 M10 13.5 h8 M13.5 4 v12" stroke="#fff" stroke-width="1"/>
<rect x="9.5" y="3.5" width="9" height="13" fill="none" stroke="#217346" stroke-width="1"/>
<path d="M0 2.5 L12 0 V20 L0 17.5 Z" fill="#217346"/>
<path d="M3 6 L8 14 M8 6 L3 14" stroke="#fff" stroke-width="1.8"/>
</svg>
<!-- floppy -->
<div class="tbb" style="left:577px;top:740px;width:36px;height:25px"></div>
<svg class="a" style="left:585px;top:743px" width="20" height="20" viewBox="0 0 20 20">
<path d="M0.5 0.5 H17 L19.5 3 V19.5 H0.5 Z" fill="#1a1ae0" stroke="#000080" stroke-width="0.8"/><rect x="6" y="1" width="8" height="5" fill="#c8c8c8"/><rect x="10" y="1.5" width="2" height="4" fill="#1a1ae0"/><rect x="3" y="9" width="14" height="10" fill="#ff2020"/><path d="M3 10.5 h14 M3 12.5 h14 M3 14.5 h14" stroke="#ffd0d0" stroke-width="1"/>
</svg>
<!-- network button -->
<div class="tbb" style="left:615px;top:740px;width:36px;height:25px"></div>
<svg class="a" style="left:622px;top:743px" width="22" height="20" viewBox="0 0 22 20">
<path d="M3 1 H19 V11 H3 Z" fill="#4f83cc" stroke="#2d5c9c"/><path d="M1 12 H21 L19 15 H3 Z" fill="#9ab"/>
<path d="M4 4 h7 v3 h-7z" fill="#cde"/><path d="M7 16 h8 v3 h-8 z" fill="#bbb"/>
</svg>
<!-- chrome -->
<svg class="a" style="left:662px;top:743px" width="19" height="19" viewBox="0 0 19 19">
<circle cx="9.5" cy="9.5" r="9" fill="#db4437"/>
<path d="M9.5 9.5 L1.7 5 A9 9 0 0 0 9.5 18.5 Z" fill="#0f9d58"/>
<path d="M9.5 9.5 L17.3 5 A9 9 0 0 1 9.5 18.5 Z" fill="#f4b400"/>
<circle cx="9.5" cy="9.5" r="4.2" fill="#fff"/><circle cx="9.5" cy="9.5" r="3.2" fill="#4285f4"/>
</svg>
<!-- skype button -->
<div class="tbb" style="left:691px;top:740px;width:36px;height:25px"></div>
<svg class="a" style="left:700px;top:743px" width="19" height="19" viewBox="0 0 19 19">
<circle cx="5" cy="5" r="4.5" fill="#00aff0"/><circle cx="14" cy="14" r="4.5" fill="#00aff0"/><circle cx="9.5" cy="9.5" r="8" fill="#00aff0"/>
<text x="9.5" y="14.5" text-anchor="middle" font-family="Liberation Sans" font-weight="bold" font-size="13" fill="#fff">S</text>
</svg>
<!-- photo viewer button -->
<div class="tbb" style="left:729px;top:740px;width:36px;height:25px"></div>
<svg class="a" style="left:737px;top:743px" width="20" height="20" viewBox="0 0 20 20">
<rect x="3" y="3" width="14" height="14" fill="#dfe9f3" stroke="#6688aa"/><path d="M4 16 L9 10 L12 13 L16 9 V16 Z" fill="#5b9a3a"/><rect x="4" y="4" width="12" height="6" fill="#8fc3ee"/>
<path d="M0 4 V0 H4 M16 0 H20 V4 M20 16 V20 H16 M4 20 H0 V16" stroke="#3b7dd8" stroke-width="2" fill="none"/>
</svg>
<!-- separators -->
<div class="a" style="left:788px;top:742px;width:3px;height:21px;background:#fff;border-right:1px solid #808080"></div>
<div class="t" style="left:800px;top:748px;font-size:13px;color:#000">CS</div>
<div class="a" style="left:823px;top:742px;width:3px;height:21px;background:#fff;border-right:1px solid #808080"></div>
<!-- tray -->
<div class="a" style="left:829px;top:741px;width:193px;height:24px;border-top:1px solid #808080;border-left:1px solid #808080;border-bottom:1px solid #fff;border-right:1px solid #fff"></div>
<svg class="a" style="left:837px;top:748px" width="8" height="9" viewBox="0 0 8 9"><path d="M1 4 L4 1 L7 4 M1 8 L4 5 L7 8" stroke="#000" stroke-width="1.6" fill="none"/></svg>
<svg class="a" style="left:857px;top:743px" width="21" height="21" viewBox="0 0 21 21">
<path d="M1 8 H20 V20 H1 Z" fill="#1aa01a"/><path d="M9 1 H18 L20 4 H9 Z" fill="#1aa01a"/><path d="M9 1 V9" stroke="#1aa01a" stroke-width="2"/>
<path d="M5 13 L8.5 16.5 L15 10" stroke="#fff" stroke-width="2.4" fill="none"/>
</svg>
<svg class="a" style="left:887px;top:742px" width="21" height="22" viewBox="0 0 21 22">
<path d="M1 7 H5 L11 1 V21 L5 15 H1 Z" fill="#f0f0f0" stroke="#777" stroke-width="1"/>
<path d="M14 7 Q16 11 14 15 M17 5 Q20 11 17 17" stroke="#888" stroke-width="1.2" fill="none"/>
</svg>
<svg class="a" style="left:917px;top:745px" width="21" height="15" viewBox="0 0 21 15">
<path d="M4 14 Q0 14 0.5 10 Q1 7 4.5 7.5 Q5 2 10 2 Q14 1 15.5 5 Q20 5 20 9.5 Q20 14 16 14 Z" fill="#f7f7f7" stroke="#777" stroke-width="1.1"/>
</svg>
<div class="t" style="left:955px;top:748px;font-size:14px;color:#000;letter-spacing:0.1px">14:46</div>
<svg class="a" style="left:1000px;top:746px" width="19" height="14" viewBox="0 0 19 14"><rect x="0" y="0" width="19" height="14" fill="#3a78d8"/><rect x="1" y="1" width="17" height="10" fill="#5596ef"/><path d="M1 12 h5" stroke="#2a9a2a" stroke-width="1.5"/></svg>

<!-- STATUS -->
<!--STATUS-->
<!-- TASKBAR -->
<!--TASKBAR-->

</body></html>
